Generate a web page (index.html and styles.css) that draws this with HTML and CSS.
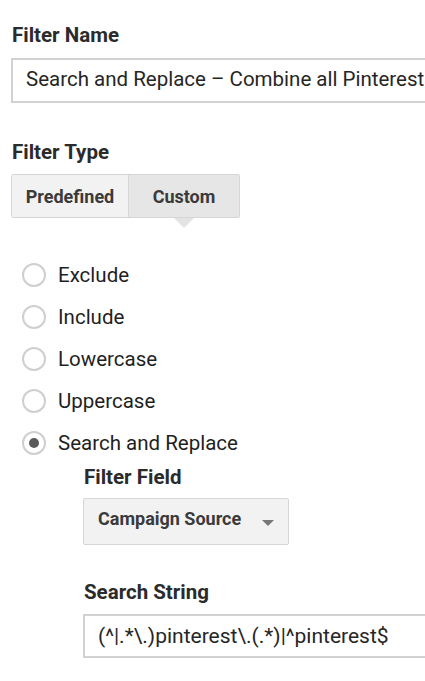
FILE: index.html
```html
<!DOCTYPE html>
<html>
<head>
<meta charset="utf-8">
<link rel="stylesheet" href="styles.css">
</head>
<body>
<div class="page">
  <section class="field-name">
    <h2 class="label">Filter Name</h2>
    <div class="text-input wide">Search and Replace – Combine all Pinterest</div>
  </section>

  <section class="field-type">
    <h2 class="label">Filter Type</h2>
    <div class="toggle">
      <div class="toggle-btn">Predefined</div>
      <div class="toggle-btn active">Custom</div>
    </div>
  </section>

  <ul class="radios">
    <li class="radio-row"><span class="radio"></span><span class="radio-text">Exclude</span></li>
    <li class="radio-row"><span class="radio"></span><span class="radio-text">Include</span></li>
    <li class="radio-row"><span class="radio"></span><span class="radio-text">Lowercase</span></li>
    <li class="radio-row"><span class="radio"></span><span class="radio-text">Uppercase</span></li>
    <li class="radio-row"><span class="radio checked"></span><span class="radio-text">Search and Replace</span></li>
  </ul>

  <section class="sub">
    <h2 class="label">Filter Field</h2>
    <div class="select">
      <span class="select-text">Campaign Source</span>
      <span class="caret"></span>
    </div>
    <h2 class="label search-label">Search String</h2>
    <div class="text-input search">(^|.*\.)pinterest\.(.*)|^pinterest$</div>
  </section>
</div>
</body>
</html>
```

FILE: styles.css
```css
html, body {
  margin: 0;
  padding: 0;
  background: #ffffff;
  overflow: hidden;
}

body {
  font-family: Roboto, "Liberation Sans", Arial, sans-serif;
  color: #222222;
  width: 425px;
  height: 681px;
}

.page {
  padding: 23px 0 0 11px;
}

.label {
  margin: 0;
  font-size: 20.5px;
  line-height: 24px;
  font-weight: 700;
  color: #2b2b2b;
  padding-left: 1px;
}

.text-input {
  box-sizing: border-box;
  height: 45px;
  border: 2px solid #d2d2d2;
  background: #fff;
  font-size: 20.5px;
  line-height: 38px;
  padding-left: 13px;
  white-space: nowrap;
  overflow: hidden;
  color: #262626;
}

.text-input.wide {
  margin-top: 11px;
  width: 460px;
}

.field-type {
  margin-top: 37px;
}

.toggle {
  margin-top: 10px;
  display: flex;
  width: 229px;
  height: 44px;
  box-sizing: border-box;
  border: 1px solid #d6d6d6;
  border-radius: 2px;
}

.toggle-btn {
  display: flex;
  align-items: center;
  justify-content: center;
  font-size: 18px;
  font-weight: 700;
  color: #3a3a3a;
  background: #f2f2f2;
  position: relative;
}

.toggle-btn:first-child {
  width: 116px;
  border-right: 1px solid #d6d6d6;
}

.toggle-btn.active {
  flex: 1;
  background: #e6e6e6;
}

.toggle-btn.active::after {
  content: "";
  position: absolute;
  left: 50%;
  bottom: -11px;
  margin-left: -10px;
  border-left: 10px solid transparent;
  border-right: 10px solid transparent;
  border-top: 10px solid #e3e3e3;
}

.radios {
  list-style: none;
  margin: 36px 0 0 0;
  padding: 0 0 0 11px;
}

.radio-row {
  display: flex;
  align-items: center;
  height: 42px;
}

.radio {
  box-sizing: border-box;
  width: 24px;
  height: 24px;
  border: 2px solid #cfcfcf;
  border-radius: 50%;
  margin-right: 12px;
  display: flex;
  align-items: center;
  justify-content: center;
}

.radio.checked::after {
  content: "";
  width: 10px;
  height: 10px;
  border-radius: 50%;
  background: #5a5a5a;
}

.radio-text {
  font-size: 20.5px;
  color: #1f1f1f;
}

.sub {
  padding-left: 72px;
  margin-top: 1px;
}

.select {
  margin-top: 9px;
  box-sizing: border-box;
  width: 206px;
  height: 47px;
  border: 1px solid #d6d6d6;
  border-radius: 2px;
  background: #f2f2f2;
  display: flex;
  justify-content: space-between;
  align-items: flex-start;
  padding: 10px 14px 0 14px;
}

.select-text {
  font-size: 18px;
  font-weight: 700;
  color: #3a3a3a;
  line-height: 20px;
}

.caret {
  margin-top: 11px;
  border-left: 6px solid transparent;
  border-right: 6px solid transparent;
  border-top: 6px solid #777;
}

.search-label {
  margin-top: 35px;
}

.text-input.search {
  margin-top: 10px;
  width: 380px;
  height: 44px;
  line-height: 40px;
  font-size: 21px;
}
```
